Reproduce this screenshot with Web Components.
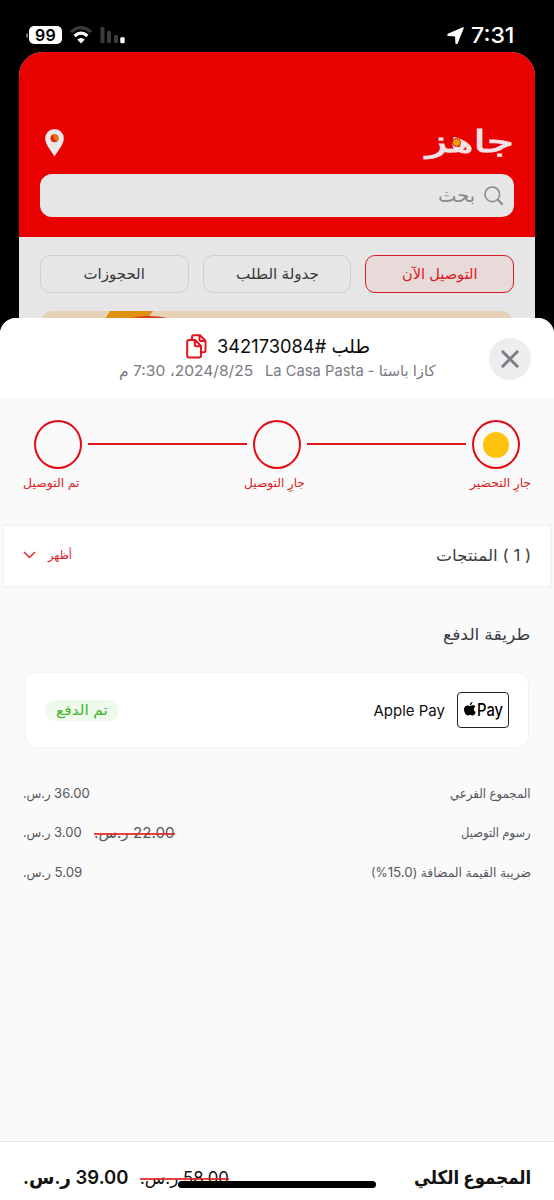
<!DOCTYPE html>
<html lang="ar">
<head>
<meta charset="utf-8">
<title>جاهز</title>
<style>
html,body{margin:0;background:#000}
body{width:554px;height:1200px;overflow:hidden;font-family:Inter,"DejaVu Sans",sans-serif}
</style>
</head>
<body>
<order-app></order-app>
<script>
function define(name, html, setup) {
  const t = document.createElement('template');
  t.innerHTML = html;
  customElements.define(name, class extends HTMLElement {
    connectedCallback() {
      if (this.shadowRoot) return;
      this.attachShadow({mode: 'open'}).appendChild(t.content.cloneNode(true));
      if (setup) setup(this, this.shadowRoot);
    }
  });
}

/* A single line of text condensed or widened to a given width; "strike" adds a red line over it. */
define('fit-text', `
<style>
:host{display:block;flex:none;direction:rtl;white-space:nowrap;position:relative;color:inherit}
span{display:block;width:max-content;transform-origin:100% 50%;line-height:inherit}
:host([strike])::after{content:"";position:absolute;z-index:1;left:0;right:0;top:50%;height:2px;background:#e02020;opacity:.85}
</style><span><slot></slot></span>`, (el, root) => {
  const w = +el.getAttribute('w'), s = root.querySelector('span');
  el.style.width = w + 'px';
  s.style.transform = 'scaleX(' + (w / s.offsetWidth) + ')';
});

define('status-bar', `
<style>
:host{display:flex;direction:ltr;height:52px;box-sizing:border-box;padding:18px 40px 0 26px;justify-content:space-between;color:#fff}
.l,.r{display:flex;height:34px}
.b{width:33px;height:18px;margin:8px 0 0 1px;border-radius:5px;background:#fff;color:#000;font:600 16px/18px Inter,sans-serif;text-align:center;letter-spacing:.3px}
.nub{width:2px;height:5px;border-radius:2px 0 0 2px;background:#777;margin-top:15px}
svg{display:block}
fit-text{font:500 22px/34px Inter,sans-serif}
</style>
<div class="l"><div class="nub"></div><div class="b">99</div>
<svg width="66" height="34" viewBox="62 18 66 34">
<g fill="none"><path d="M71 32.100Q81 23.200 91 32.100" stroke="#3b3b3b" stroke-width="3.200"/><path d="M74.600 36Q81 30.200 87.400 36" stroke="#fff" stroke-width="3.200"/></g>
<path d="M77.200 39.400Q81 36.400 84.800 39.400L81 43.400Z" fill="#fff"/>
<g fill="#3b3b3b"><rect x="100.500" y="27" width="4" height="16" rx="1"/><rect x="107" y="31" width="4" height="12" rx="1"/><rect x="114" y="35" width="4" height="8" rx="1"/></g><rect x="120.300" y="37.200" width="4.400" height="6" rx="1.200" fill="#fff"/></svg></div>
<div class="r"><svg width="25" height="34" viewBox="446 18 25 34"><path d="M463 28L448.200 34.600L448.300 35.300L455.800 35.700L456.200 43.200L456.900 43.200Z" fill="#fff" stroke="#fff" stroke-width="1.600" stroke-linejoin="round"/></svg><fit-text w="43">7:31</fit-text></div>`);

define('map-pin', `
<style>:host{display:block;width:19px;height:28px}svg{display:block}</style>
<svg width="19" height="28" viewBox="0 0 19 28"><path d="M9.500 0A9.300 9.300 0 0 0 .2 9.400C.2 15.500 6 21.500 9.500 27.500C13 21.500 18.800 15.500 18.800 9.400A9.300 9.300 0 0 0 9.500 0Z" fill="#e8e8e8"/><circle cx="9.500" cy="9.300" r="4" fill="#d8231d"/><path d="M8.300 5.500A4 4 0 0 1 12 12.400Q8 10.500 8.300 5.500Z" fill="#e8760b"/></svg>`);

define('brand-logo', `
<style>:host{display:block;position:relative;width:89px;height:32px;color:#f4e2e4}
fit-text{font:400 30px/32px "DejaVu Sans",sans-serif;-webkit-text-stroke:1px #f4e2e4}
i{position:absolute;left:27px;top:12px;width:7px;height:7px;border-radius:50%;background:#f2a000;border:1.500px solid #c4281c}</style>
<fit-text w="88">جاهز</fit-text><i></i>`);

define('search-box', `
<style>:host{display:flex;align-items:center;height:43px;border-radius:12px;background:#e6e6e6;box-sizing:border-box;padding:0 10px;gap:9px;color:#8a8a8a}
svg{display:block}fit-text{font-size:19px;line-height:40px}</style>
<svg width="20" height="20" viewBox="0 0 20 20" fill="none" stroke="#8b8b8b"><circle cx="8.300" cy="8.300" r="7.300" stroke-width="1.600"/><path d="M13.500 13.500L18.800 18.800" stroke-width="2.200"/></svg>
<fit-text w="37">بحث</fit-text>`);

define('tab-pill', `
<style>:host{display:flex;flex:1;height:38px;box-sizing:border-box;border:1.500px solid #cfcfd3;border-radius:10px;align-items:center;justify-content:center;color:#37383d;font-size:15px;line-height:34px}
:host([active]){border-color:#d91a20;background:#e9dada;color:#de1820}</style><slot></slot>`);

define('home-screen', `
<style>
:host{display:block;margin:0 19px;height:270px;border-radius:24px 24px 0 0;background:#e6e6e6;overflow:hidden}
.red{height:185px;background:#e90000;box-sizing:border-box;padding:74px 21px 0}
.top{display:flex;justify-content:space-between;height:48px}
map-pin{margin:3px 0 0 5px}
.tabs{display:flex;gap:14px;padding:18px 21px 0}
svg{display:block;margin:18px auto 0}
</style>
<div class="red"><div class="top"><brand-logo></brand-logo><map-pin></map-pin></div><search-box></search-box></div>
<div class="tabs"><tab-pill active><fit-text w="76">التوصيل الآن</fit-text></tab-pill><tab-pill><fit-text w="83">جدولة الطلب</fit-text></tab-pill><tab-pill><fit-text w="61">الحجوزات</fit-text></tab-pill></div>
<svg width="472" height="16" viewBox="0 0 472 16"><rect width="472" height="40" rx="12" fill="#e6d2b7"/><path d="M69 0H112L100 16H59Z" fill="#e29010"/><path d="M90 8Q107 3.500 128 8Z" fill="#d83b18" transform="translate(0 -.8)"/></svg>`);

define('sheet-header', `
<style>
:host{display:flex;height:80px;background:#fff;box-sizing:border-box;padding:0 23px;align-items:flex-start}
button{flex:none;display:flex;align-items:center;justify-content:center;width:42px;height:42px;margin:20px 0 0;padding:0;border:0;border-radius:50%;background:#ededf0}
.mid{flex:1;padding-top:15px}
.t{display:flex;height:27px;align-items:center;gap:10px;padding-right:119px;color:#0c0c0c;font-size:19px;line-height:27px}
.s{display:flex;height:22px;gap:12px;align-items:center;padding-right:54px;font-size:15px;line-height:20px;color:#797b81}
svg{display:block}
</style>
<button aria-label="إغلاق"><svg width="18" height="18" viewBox="0 0 18 18" stroke="#7e7e83" stroke-width="3" stroke-linecap="round"><path d="M1.800 1.800L16.200 16.200M16.200 1.800L1.800 16.200"/></svg></button>
<div class="mid"><div class="t"><fit-text w="153">طلب #342173084</fit-text>
<svg width="21" height="25" viewBox="0 0 21 25" fill="none" stroke="#e5131b" stroke-width="2" stroke-linejoin="round"><path d="M6 5.500V3Q6 1.200 7.800 1.200H14L19.500 6.800V16.500Q19.500 18.300 17.700 18.300H15.500M13.500 1.500V5.500Q13.500 7 15 7H19"/><path d="M3 5.900H9L15 12V21.500Q15 23.500 13 23.500H3Q1.200 23.500 1.200 21.500V7.800Q1.200 5.900 3 5.900ZM8.800 6.300V10.500Q8.800 12.300 10.500 12.300H14.600"/></svg></div>
<div class="s"><fit-text w="170">كازا باستا - La Casa Pasta</fit-text><fit-text w="134">2024/8/25، 7:30 م</fit-text></div></div>`);

define('order-steps', `
<style>
:host{display:block;height:126px;box-sizing:border-box;padding:22px 23px 0}
.track{display:flex;align-items:center;gap:6px;padding:0 11px}
b{flex:none;display:flex;align-items:center;justify-content:center;width:48px;height:49px;border:2px solid #e30b13;border-radius:50%;box-sizing:border-box}
b i{width:26px;height:26px;border-radius:50%;background:#ffc20e}
u{flex:1;height:2px;background:#e0141b;margin-top:-1px}
.labels{display:flex;justify-content:space-between;margin-top:3px;font-size:12px;line-height:22px;color:#dc1c22}
</style>
<div class="track"><b><i></i></b><u></u><b></b><u></u><b></b></div>
<div class="labels"><fit-text w="61">جارِ التحضير</fit-text><fit-text w="61">جارِ التوصيل</fit-text><fit-text w="56">تم التوصيل</fit-text></div>`);

define('products-bar', `
<style>
:host{display:flex;justify-content:space-between;align-items:center;height:64px;margin:0 2px;box-sizing:border-box;border:2px solid #f4f4f8;background:#fff;padding:0 19px 2px;color:#3b3d43;font-size:16px;line-height:30px}
.m{display:flex;align-items:center;gap:12px;color:#e0262c;font-size:12px}
svg{display:block}
</style>
<fit-text w="95">( 1 ) المنتجات</fit-text><div class="m"><fit-text w="24">أظهر</fit-text><svg width="13" height="8" viewBox="0 0 13 8" fill="none" stroke="#dc2a30" stroke-width="1.500"><path d="M1 1L6.500 6.500L12 1"/></svg></div>`);

define('pay-mark', `
<style>:host{display:flex;direction:ltr;align-items:center;justify-content:center;gap:1px;width:52px;height:36px;box-sizing:border-box;border:1.500px solid #222;border-radius:4px;background:#fff;color:#000}
svg{display:block;margin-top:-2px}fit-text{font:500 17px/30px Inter,sans-serif}</style>
<svg width="12" height="14" viewBox="0 0 12 14"><path d="M8.500 0C8.600 1.500 7.300 3 5.900 2.900C5.800 1.500 7.100.2 8.500 0ZM6.200 4C6.800 4 7.600 3.300 8.800 3.300C9.800 3.300 10.800 3.800 11.400 4.700C9.200 6 9.500 9 11.800 9.900C11.100 11.600 10 13.500 8.800 13.500C7.900 13.500 7.500 12.900 6.300 12.900C5.100 12.900 4.600 13.500 3.800 13.500C1.800 13.500 0 10 0 7.500C0 4.900 1.700 3.400 3.400 3.400C4.600 3.400 5.500 4 6.200 4Z"/></svg><fit-text w="26">Pay</fit-text>`);

define('payment-card', `
<style>
:host{display:flex;align-items:center;height:76px;margin:0 25px;box-sizing:border-box;border:1.500px solid #f2f2f5;border-radius:12px;background:#fff;padding:0 19px}
.n{margin-right:12px;font-size:15px;line-height:26px;padding-top:1px;color:#111}
.badge{margin-right:auto;display:flex;align-items:center;justify-content:center;width:74px;height:21px;border-radius:11px;background:#effaec;color:#45b52c;font-size:14px;line-height:20px}
</style>
<pay-mark></pay-mark><fit-text class="n" w="72">Apple Pay</fit-text><div class="badge"><fit-text w="52">تم الدفع</fit-text></div>`);

define('price-row', `
<style>
:host{display:flex;justify-content:space-between;align-items:center;height:39.300px;padding:0 23px;color:#55575d;font-size:12.500px;line-height:24px}
.v{display:flex;gap:12px;align-items:center}
</style><slot></slot><div class="v"><slot name="value"></slot></div>`);

define('total-bar', `
<style>
:host{display:flex;position:relative;height:59px;box-sizing:border-box;border-top:1.500px solid #e2e2e4;background:#fff;justify-content:space-between;align-items:flex-start;padding:20px 23px 0;color:#111;font-size:19px;font-weight:600;line-height:32px}
.v{display:flex;gap:12px;align-items:flex-start}
.old{font-size:17px;font-weight:400}
.home{position:absolute;z-index:2;left:178px;top:39px;width:198px;height:7px;border-radius:4px;background:#000}
</style>
<fit-text w="117">المجموع الكلي</fit-text><div class="v"><fit-text class="old" strike w="89">58.00 ر.س.</fit-text><fit-text w="105">39.00 ر.س.</fit-text></div><div class="home"></div>`);

define('order-sheet', `
<style>
:host{display:flex;flex-direction:column;position:relative;height:882px;margin-top:-4px;border-radius:16px 16px 0 0;overflow:hidden;background:#fafafa}
h2{margin:33px 24px 24px;height:27px;font-weight:400;font-size:16px;line-height:27px;color:#3b3d43}
.rows{padding-top:26px;flex:1}
.n{font-size:13.500px;letter-spacing:.5px}
.old,.old .n{font-size:15px}
</style>
<sheet-header></sheet-header><order-steps></order-steps><products-bar></products-bar>
<h2><fit-text w="87">طريقة الدفع</fit-text></h2>
<payment-card></payment-card>
<div class="rows">
<price-row><fit-text w="81">المجموع الفرعي</fit-text><fit-text slot="value" w="67"><span class="n">36.00</span> ر.س.</fit-text></price-row>
<price-row><fit-text w="70">رسوم التوصيل</fit-text><fit-text slot="value" class="old" strike w="81"><span class="n">22.00</span> ر.س.</fit-text><fit-text slot="value" w="59"><span class="n">3.00</span> ر.س.</fit-text></price-row>
<price-row><fit-text w="160">ضريبة القيمة المضافة (<span class="n">15.0</span>%)</fit-text><fit-text slot="value" w="59"><span class="n">5.09</span> ر.س.</fit-text></price-row>
</div>
<total-bar></total-bar>`);

define('order-app', `
<style>:host{display:block;direction:rtl;width:554px;height:1200px;overflow:hidden;background:#000}</style>
<status-bar></status-bar><home-screen></home-screen><order-sheet></order-sheet>`);
</script>
</body>
</html>
